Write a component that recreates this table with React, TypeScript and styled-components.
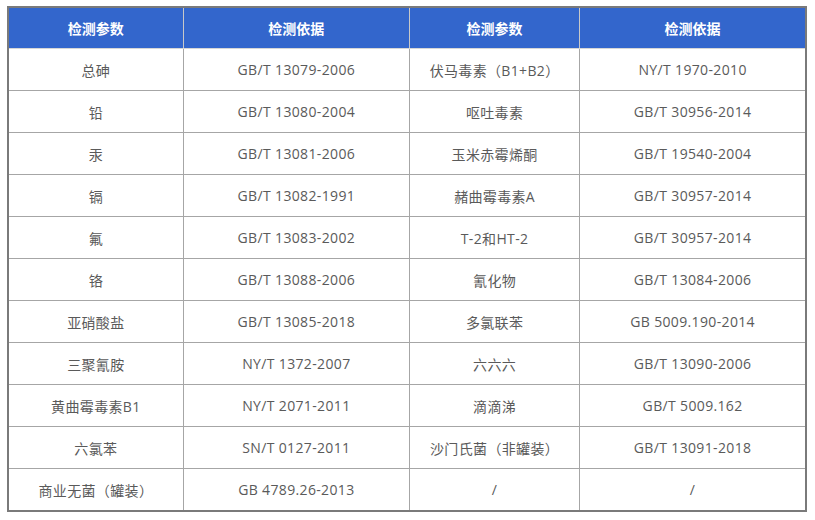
import styled, { createGlobalStyle } from 'styled-components'

const GlobalStyle = createGlobalStyle`
  body {
    margin: 0;
    background: #ffffff;
    font-family: "Open Sans", "Noto Sans CJK SC", sans-serif;
  }
`

const rows: [string, string, string, string][] = [
  ['总砷', 'GB/T 13079-2006', '伏马毒素（B1+B2）', 'NY/T 1970-2010'],
  ['铅', 'GB/T 13080-2004', '呕吐毒素', 'GB/T 30956-2014'],
  ['汞', 'GB/T 13081-2006', '玉米赤霉烯酮', 'GB/T 19540-2004'],
  ['镉', 'GB/T 13082-1991', '赭曲霉毒素A', 'GB/T 30957-2014'],
  ['氟', 'GB/T 13083-2002', 'T-2和HT-2', 'GB/T 30957-2014'],
  ['铬', 'GB/T 13088-2006', '氰化物', 'GB/T 13084-2006'],
  ['亚硝酸盐', 'GB/T 13085-2018', '多氯联苯', 'GB 5009.190-2014'],
  ['三聚氰胺', 'NY/T 1372-2007', '六六六', 'GB/T 13090-2006'],
  ['黄曲霉毒素B1', 'NY/T 2071-2011', '滴滴涕', 'GB/T 5009.162'],
  ['六氯苯', 'SN/T 0127-2011', '沙门氏菌（非罐装）', 'GB/T 13091-2018'],
  ['商业无菌（罐装）', 'GB 4789.26-2013', '/', '/'],
]

const colWidths = [175, 226, 170, 226]

function App() {
  return (
    <>
      <GlobalStyle />
      <Page>
        <Table>
          <colgroup>
            {colWidths.map((w, i) => (
              <Col key={i} $w={w} />
            ))}
          </colgroup>
          <thead>
            <tr>
              <Head>检测参数</Head>
              <Head>检测依据</Head>
              <Head>检测参数</Head>
              <Head>检测依据</Head>
            </tr>
          </thead>
          <tbody>
            {rows.map((r, i) => (
              <tr key={i}>
                {r.map((c, j) => (
                  <Cell key={j}>{c}</Cell>
                ))}
              </tr>
            ))}
          </tbody>
        </Table>
      </Page>
    </>
  )
}

const Page = styled.div`
  padding: 6px 0 0 7px;
`

const Table = styled.table`
  border-collapse: collapse;
  table-layout: fixed;
  width: 800px;
  border: 2px solid #7a7a7a;
`

const Col = styled.col<{ $w: number }>`
  width: ${({ $w }) => $w}px;
`

const Head = styled.th`
  height: 40px;
  padding: 0;
  background-color: #3366cc;
  color: #ffffff;
  font-family: "Noto Sans CJK SC", sans-serif;
  font-size: 14px;
  font-weight: bold;
  text-align: center;
  border: 1px solid #c8c8c8;
  border-bottom-color: #d6d6d6;
`

const Cell = styled.td`
  height: 41px;
  padding: 0;
  color: #5a5a5a;
  font-size: 14px;
  letter-spacing: 0.35px;
  text-align: center;
  border: 1px solid #a6a6a6;
`

export default App
